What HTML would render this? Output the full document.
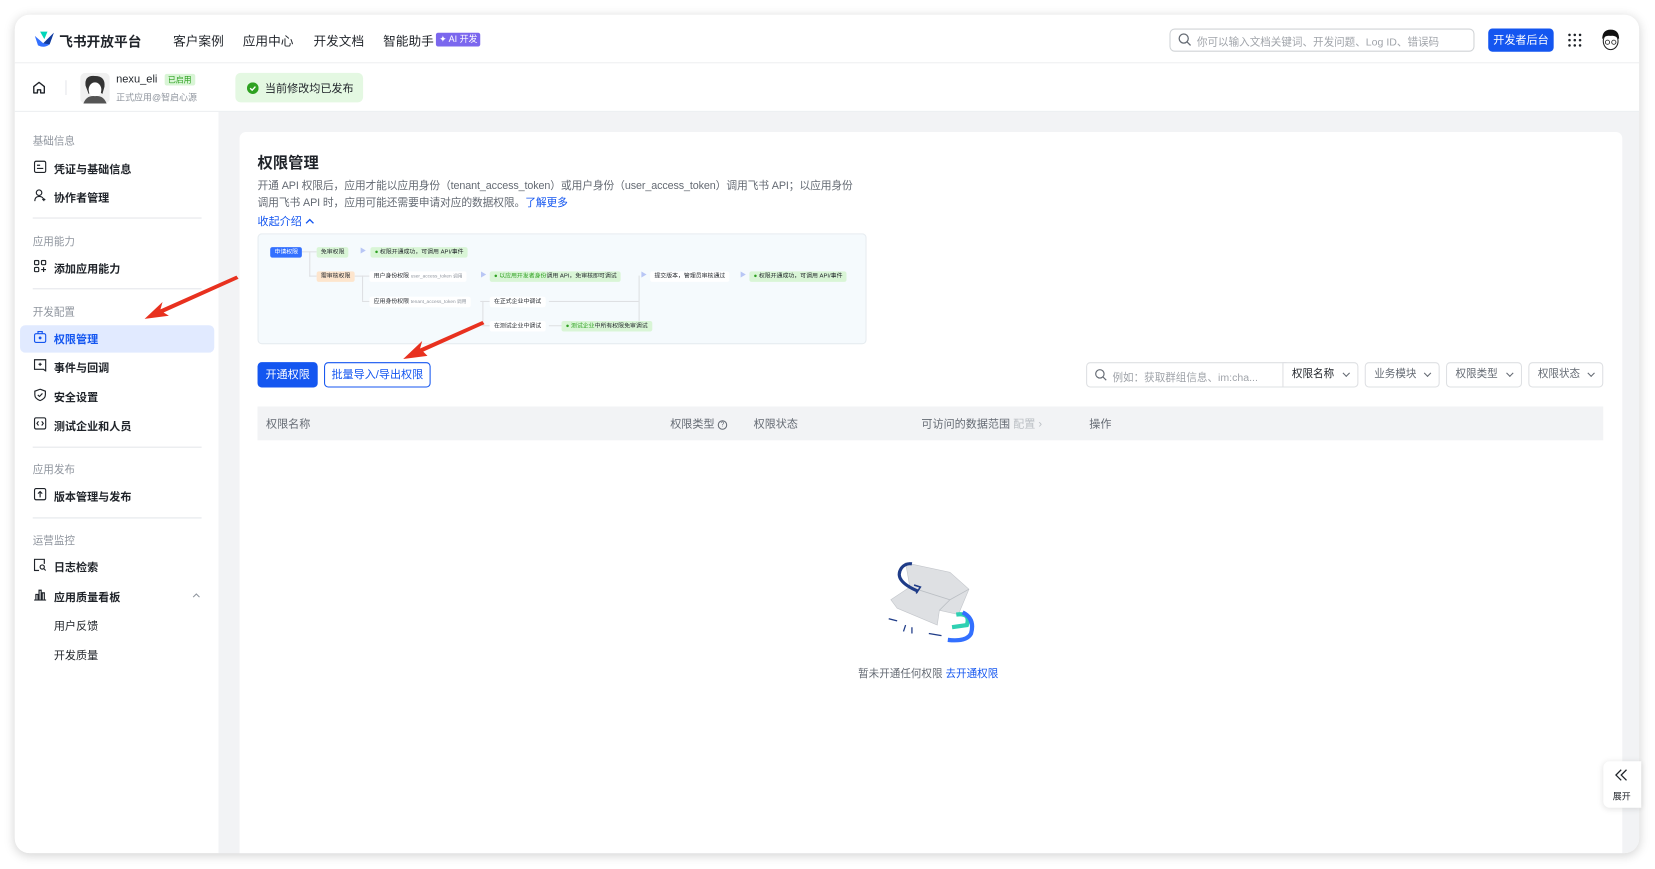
<!DOCTYPE html>
<html><head><meta charset="utf-8">
<style>
*{box-sizing:border-box;margin:0;padding:0}
html,body{width:1655px;height:869px;overflow:hidden;background:#fff}
body{font-family:"Liberation Sans","Noto Sans CJK SC",sans-serif;color:#1f2329}
#stage{position:absolute;left:0;top:0;width:1568px;height:823px;transform:scale(1.05548,1.0559);transform-origin:0 0}
.a{position:absolute;white-space:nowrap}
.win{position:absolute;left:14px;top:14px;width:1539px;height:794px;border-radius:14px;background:#fff;box-shadow:0 2px 10px rgba(0,0,0,.18);overflow:hidden}
.nav{font-size:12px;color:#1f2329}
.sec{font-size:10px;color:#8f959e}
.item{font-size:10.5px;color:#1f2329;font-weight:600}
.item svg{position:absolute;left:-19px;top:-1px}
.dv{position:absolute;left:31px;width:160px;height:1px;background:#e4e6ea}
.bx{position:absolute;height:10px;font-size:5.6px;line-height:10px;padding:0 4px;border-radius:2px;white-space:nowrap;color:#1f2329;background:#fff}
.g{background:#d9f5d6}
.ln{position:absolute;background:#dee0e3}
.sel{position:absolute;top:343px;height:24px;border:1px solid #dee0e3;border-radius:4px;font-size:10px;color:#646a73;line-height:22px;padding-left:8px;background:#fff}
.sel:after{content:"";position:absolute;right:8px;top:7px;width:4px;height:4px;border-right:1px solid #646a73;border-bottom:1px solid #646a73;transform:rotate(45deg)}
.th{position:absolute;top:394px;font-size:10.5px;color:#646a73}
</style></head><body>
<div id="stage">
<div class="win">
 <div style="position:absolute;left:0;top:0;width:1539px;height:46px;border-bottom:1px solid #eceef0;background:#fff"></div>
 <div style="position:absolute;left:0;top:46px;width:1539px;height:46px;border-bottom:1px solid #eceef0;background:#fff"></div>
 <div style="position:absolute;left:0;top:92px;width:193px;height:702px;background:#fff"></div>
 <div style="position:absolute;left:193px;top:92px;width:1346px;height:702px;background:#f2f3f5"></div>
 <div style="position:absolute;left:213px;top:111px;width:1310px;height:690px;background:#fff;border-radius:6px"></div>
</div>

<svg class="a" style="left:32px;top:29px" width="20" height="17" viewBox="0 0 20 17"><path d="M1 5 L9 12 L19 2 L15 13 Q10 17 4 14 Z" fill="#3370ff"/><path d="M6 1 L13 1 L10 8 Z" fill="#00d6b9"/><path d="M9 12 L19 2 L15 13 Z" fill="#133c9a"/></svg>
<div class="a" style="left:56px;top:29px;font-size:13px;font-weight:700">飞书开放平台</div>
<div class="a nav" style="left:164px;top:30px">客户案例</div>
<div class="a nav" style="left:230px;top:30px">应用中心</div>
<div class="a nav" style="left:297px;top:30px">开发文档</div>
<div class="a nav" style="left:363px;top:30px">智能助手</div>
<div class="a" style="left:413px;top:31px;height:13px;padding:0 3px;background:#7b67ee;color:#fff;font-size:8.5px;line-height:13px;border-radius:2px">✦ AI 开发</div>

<div class="a" style="left:1108px;top:27px;width:289px;height:22px;border:1px solid #d0d3d6;border-radius:5px"></div>
<svg class="a" style="left:1116px;top:31px" width="13" height="13" viewBox="0 0 13 13"><circle cx="5.5" cy="5.5" r="4.3" fill="none" stroke="#646a73" stroke-width="1.2"/><path d="M8.7 8.7 L12 12" stroke="#646a73" stroke-width="1.2"/></svg>
<div class="a" style="left:1134px;top:31px;font-size:10px;color:#a0a4aa">你可以输入文档关键词、开发问题、Log ID、错误码</div>
<div class="a" style="left:1410px;top:27px;width:62px;height:22px;background:#1456f0;border-radius:4px;color:#fff;font-size:10.5px;line-height:22px;text-align:center">开发者后台</div>
<svg class="a" style="left:1485px;top:31px" width="14" height="14" viewBox="0 0 14 14" fill="#1f2329"><circle cx="2" cy="2" r="1.2"/><circle cx="7" cy="2" r="1.2"/><circle cx="12" cy="2" r="1.2"/><circle cx="2" cy="7" r="1.2"/><circle cx="7" cy="7" r="1.2"/><circle cx="12" cy="7" r="1.2"/><circle cx="2" cy="12" r="1.2"/><circle cx="7" cy="12" r="1.2"/><circle cx="12" cy="12" r="1.2"/></svg>
<svg class="a" style="left:1516px;top:27px" width="20" height="22" viewBox="0 0 20 22"><ellipse cx="10" cy="12" rx="7" ry="8" fill="#fff" stroke="#222"/><path d="M2 10 Q2 1 10 1 Q18 1 18 10 Q14 6 10 7 Q5 6 2 10Z" fill="#111"/><circle cx="7" cy="13" r="2" fill="none" stroke="#222" stroke-width=".8"/><circle cx="13" cy="13" r="2" fill="none" stroke="#222" stroke-width=".8"/></svg>

<svg class="a" style="left:30px;top:76px" width="14" height="14" viewBox="0 0 14 14"><path d="M2 6 L7 2 L12 6 V12 H8.5 V9 H5.5 V12 H2 Z" fill="none" stroke="#1f2329" stroke-width="1.3" stroke-linejoin="round"/></svg>
<div class="a" style="left:62px;top:76px;width:1px;height:14px;background:#e4e6ea"></div>
<svg class="a" style="left:76px;top:69px" width="28" height="29" viewBox="0 0 28 29"><rect width="28" height="29" rx="5" fill="#f0f0f0"/><path d="M5 12 Q4 2 14 3 Q24 3 23 13 L21 20 Q14 14 8 20 Z" fill="#333"/><ellipse cx="14" cy="16" rx="6" ry="7" fill="#fff"/><path d="M3 29 Q6 21 14 22 Q22 21 25 29Z" fill="#555"/></svg>
<div class="a" style="left:110px;top:69px;font-size:10.5px">nexu_eli</div>
<div class="a" style="left:156px;top:70px;height:11px;padding:0 3px;background:#d9f5d6;color:#2ea121;font-size:7.5px;line-height:11px;border-radius:2px">已启用</div>
<div class="a" style="left:110px;top:86px;font-size:8.5px;color:#8f959e">正式应用@智启心源</div>
<div class="a" style="left:223px;top:69px;width:121px;height:28px;background:#e4f8e2;border-radius:5px"></div>
<svg class="a" style="left:234px;top:78px" width="11" height="11" viewBox="0 0 11 11"><circle cx="5.5" cy="5.5" r="5.5" fill="#2ea121"/><path d="M3 5.6 L4.9 7.4 L8 4" fill="none" stroke="#fff" stroke-width="1.3"/></svg>
<div class="a" style="left:251px;top:76px;font-size:10.5px;color:#1f2329">当前修改均已发布</div>

<div class="a sec" style="left:31px;top:125px">基础信息</div>
<div class="a item" style="left:51px;top:153px"><svg width="12" height="12" viewBox="0 0 12 12"><rect x=".7" y=".7" width="10.6" height="10.6" rx="1.5" fill="none" stroke="#1f2329" stroke-width="1.1"/><path d="M3 4.5h3M3 7.5h6" stroke="#1f2329" stroke-width="1.1"/></svg>凭证与基础信息</div>
<div class="a item" style="left:51px;top:180px"><svg width="12" height="12" viewBox="0 0 12 12"><circle cx="5" cy="3.5" r="2.6" fill="none" stroke="#1f2329" stroke-width="1.1"/><path d="M1 11.5 Q1 7 5 7 Q8 7 8.8 9M9.5 8.5v3M8 10h3" fill="none" stroke="#1f2329" stroke-width="1.1"/></svg>协作者管理</div>
<div class="dv" style="top:206px"></div>
<div class="a sec" style="left:31px;top:220px">应用能力</div>
<div class="a item" style="left:51px;top:247px"><svg width="12" height="12" viewBox="0 0 12 12" fill="none" stroke="#1f2329" stroke-width="1.1"><rect x=".7" y=".7" width="4" height="4" rx="1"/><rect x="7.3" y=".7" width="4" height="4" rx="1"/><rect x=".7" y="7.3" width="4" height="4" rx="1"/><path d="M9.3 7v4.6M7 9.3h4.6"/></svg>添加应用能力</div>
<div class="dv" style="top:273px"></div>
<div class="a sec" style="left:31px;top:287px">开发配置</div>
<div class="a" style="left:19px;top:308px;width:184px;height:26px;background:#e1eaff;border-radius:5px"></div>
<div class="a item" style="left:51px;top:314px;color:#1456f0"><svg width="12" height="12" viewBox="0 0 12 12" fill="none" stroke="#1456f0" stroke-width="1.1"><rect x=".7" y="3" width="10.6" height="8.3" rx="1.5"/><path d="M4 3V1h4v2"/><circle cx="6" cy="7" r=".8" fill="#1456f0"/></svg>权限管理</div>
<div class="a item" style="left:51px;top:341px"><svg width="12" height="12" viewBox="0 0 12 12" fill="none" stroke="#1f2329" stroke-width="1.1"><path d="M.7 .7h10.6v10.6l-2-1.5h-8.6z"/><path d="M6 3.5v3M4.5 5h3"/></svg>事件与回调</div>
<div class="a item" style="left:51px;top:369px"><svg width="12" height="12" viewBox="0 0 12 12" fill="none" stroke="#1f2329" stroke-width="1.1"><path d="M6 .6 L11 2.5 V6 Q11 9.5 6 11.4 Q1 9.5 1 6 V2.5Z"/><path d="M3.8 6 L5.4 7.5 L8.2 4.6"/></svg>安全设置</div>
<div class="a item" style="left:51px;top:396px"><svg width="12" height="12" viewBox="0 0 12 12" fill="none" stroke="#1f2329" stroke-width="1.1"><rect x=".7" y=".7" width="10.6" height="10.6" rx="1.5"/><path d="M4.5 4L3 6l1.5 2M7.5 4L9 6 7.5 8"/></svg>测试企业和人员</div>
<div class="dv" style="top:423px"></div>
<div class="a sec" style="left:31px;top:436px">应用发布</div>
<div class="a item" style="left:51px;top:463px"><svg width="12" height="12" viewBox="0 0 12 12" fill="none" stroke="#1f2329" stroke-width="1.1"><rect x=".7" y=".7" width="10.6" height="10.6" rx="1.5"/><path d="M6 9V3.5M4 5.5l2-2 2 2"/></svg>版本管理与发布</div>
<div class="dv" style="top:490px"></div>
<div class="a sec" style="left:31px;top:503px">运营监控</div>
<div class="a item" style="left:51px;top:530px"><svg width="12" height="12" viewBox="0 0 12 12" fill="none" stroke="#1f2329" stroke-width="1.1"><path d="M10 5V.7H.7v10.6H5"/><circle cx="8" cy="8" r="2"/><path d="M9.5 9.5l1.8 1.8"/></svg>日志检索</div>
<div class="a item" style="left:51px;top:558px"><svg width="12" height="12" viewBox="0 0 12 12" fill="none" stroke="#1f2329" stroke-width="1.1"><path d="M.3 11.3h11.4M2 11V6h2v5M5 11V2h2v9M8 11V4.5h2V11"/></svg>应用质量看板</div>
<svg class="a" style="left:182px;top:561px" width="8" height="6" viewBox="0 0 8 6"><path d="M1 4.5 L4 1.5 L7 4.5" fill="none" stroke="#8f959e" stroke-width="1"/></svg>
<div class="a item" style="left:51px;top:585px;font-weight:400">用户反馈</div>
<div class="a item" style="left:51px;top:613px;font-weight:400">开发质量</div>

<div class="a" style="left:244px;top:143px;font-size:14.5px;font-weight:600">权限管理</div>
<div class="a" style="left:244px;top:169px;font-size:10.2px;color:#646a73;line-height:16px;letter-spacing:-.1px">开通 API 权限后，应用才能以应用身份（tenant_access_token）或用户身份（user_access_token）调用飞书 API；以应用身份<br>调用飞书 API 时，应用可能还需要申请对应的数据权限。<span style="color:#1456f0">了解更多</span></div>
<div class="a" style="left:244px;top:202px;font-size:10.5px;color:#1456f0">收起介绍 <svg width="9" height="7" viewBox="0 0 9 7"><path d="M1 5.5 L4.5 2 L8 5.5" fill="none" stroke="#1456f0" stroke-width="1.3"/></svg></div>

<div class="a" style="left:244px;top:221px;width:577px;height:105px;background:#f5fafd;border:1px solid #e6ecf0;border-radius:4px"></div>
<div class="ln" style="left:286px;top:238px;width:14px;height:1px"></div>
<div class="ln" style="left:293px;top:238px;width:1px;height:24px"></div>
<div class="ln" style="left:293px;top:261px;width:7px;height:1px"></div>
<div class="ln" style="left:336px;top:261px;width:14px;height:1px"></div>
<div class="ln" style="left:343px;top:261px;width:1px;height:24px"></div>
<div class="ln" style="left:343px;top:285px;width:7px;height:1px"></div>
<div class="ln" style="left:455px;top:285px;width:9px;height:1px"></div>
<div class="ln" style="left:457px;top:285px;width:1px;height:24px"></div>
<div class="ln" style="left:457px;top:308px;width:7px;height:1px"></div>
<div class="ln" style="left:520px;top:285px;width:85px;height:1px"></div>
<div class="ln" style="left:605px;top:261px;width:1px;height:48px"></div>
<div class="ln" style="left:520px;top:308px;width:12px;height:1px"></div>
<div class="bx" style="left:256px;top:234px;background:#3370ff;color:#fff">申请权限</div>
<div class="bx g" style="left:300px;top:234px">免审权限</div>
<div class="a" style="left:341px;top:232px;font-size:6px;color:#b8c6f5">▶</div>
<div class="bx g" style="left:351px;top:234px"><span style="color:#2ea121">●</span> 权限开通成功，可调用 API/事件</div>
<div class="bx" style="left:300px;top:257px;background:#fde5cd">需审核权限</div>
<div class="bx" style="left:350px;top:257px">用户身份权限 <span style="color:#8f959e;font-size:4.5px">user_access_token 调用</span></div>
<div class="a" style="left:455px;top:255px;font-size:6px;color:#b8c6f5">▶</div>
<div class="bx g" style="left:464px;top:257px"><span style="color:#2ea121">●</span> <span style="color:#2ea121">以应用开发者身份</span>调用 API，免审核即可调试</div>
<div class="a" style="left:607px;top:255px;font-size:6px;color:#b8c6f5">▶</div>
<div class="bx" style="left:616px;top:257px">提交版本，管理员审核通过</div>
<div class="a" style="left:701px;top:255px;font-size:6px;color:#b8c6f5">▶</div>
<div class="bx g" style="left:710px;top:257px"><span style="color:#2ea121">●</span> 权限开通成功，可调用 API/事件</div>
<div class="bx" style="left:350px;top:281px">应用身份权限 <span style="color:#8f959e;font-size:4.5px">tenant_access_token 调用</span></div>
<div class="bx" style="left:464px;top:281px">在正式企业中调试</div>
<div class="bx" style="left:464px;top:304px">在测试企业中调试</div>
<div class="bx g" style="left:532px;top:304px"><span style="color:#2ea121">● 测试企业</span>中所有权限免审调试</div>

<div class="a" style="left:244px;top:343px;width:57px;height:24px;background:#1456f0;border-radius:4px;color:#fff;font-size:10.5px;line-height:24px;text-align:center">开通权限</div>
<div class="a" style="left:307px;top:343px;width:101px;height:24px;border:1px solid #1456f0;border-radius:4px;color:#1456f0;font-size:10.5px;line-height:22px;text-align:center">批量导入/导出权限</div>

<div class="a" style="left:1029px;top:343px;width:190px;height:24px;border:1px solid #dee0e3;border-radius:4px 0 0 4px"></div>
<svg class="a" style="left:1037px;top:349px" width="12" height="12" viewBox="0 0 13 13"><circle cx="5.5" cy="5.5" r="4.3" fill="none" stroke="#646a73" stroke-width="1.2"/><path d="M8.7 8.7 L12 12" stroke="#646a73" stroke-width="1.2"/></svg>
<div class="a" style="left:1054px;top:349px;font-size:10px;color:#a0a4aa">例如：获取群组信息、im:cha...</div>
<div class="sel" style="left:1215px;width:72px;color:#1f2329;border-radius:0 4px 4px 0">权限名称</div>
<div class="sel" style="left:1293px;width:71px">业务模块</div>
<div class="sel" style="left:1370px;width:72px">权限类型</div>
<div class="sel" style="left:1448px;width:71px">权限状态</div>

<div class="a" style="left:244px;top:385px;width:1275px;height:32px;background:#f2f3f5"></div>
<div class="th" style="left:252px">权限名称</div>
<div class="th" style="left:635px">权限类型 <span style="display:inline-block;width:9px;height:9px;border:1px solid #646a73;border-radius:50%;font-size:6.5px;line-height:7px;text-align:center;vertical-align:1px">?</span></div>
<div class="th" style="left:714px">权限状态</div>
<div class="th" style="left:873px">可访问的数据范围 <span style="color:#bbbfc4">配置 ›</span></div>
<div class="th" style="left:1032px">操作</div>

<svg class="a" style="left:840px;top:530px" width="90" height="82" viewBox="0 0 90 82">
 <path d="M18 3 L60 12 L78 28 L68 52 L50 48 L48 62 L10 46 L4 38 L22 26 Z" fill="#dee0e3" stroke="#c4c7cc" stroke-width=".6"/>
 <path d="M22 26 L60 38 L78 28 M60 38 L50 48" fill="none" stroke="#bbbfc4" stroke-width=".8"/>
 <path d="M30 30 Q6 20 14 8 Q18 3 24 4" fill="none" stroke="#1f3c88" stroke-width="3"/>
 <path d="M28 32 L32 26 L26 24" fill="none" stroke="#1f3c88" stroke-width="1.5"/>
 <path d="M66 52 Q80 50 76 62 L62 64" fill="none" stroke="#2fd0b2" stroke-width="4"/>
 <path d="M72 50 Q84 56 80 70 Q76 78 58 76" fill="none" stroke="#3370ff" stroke-width="4"/>
 <path d="M52 72 L40 70 M10 58 L2 56 M18 62 L16 68 M24 64 L24 70" stroke="#1f3c88" stroke-width="1.2"/>
</svg>
<div class="a" style="left:813px;top:629px;font-size:10px;color:#646a73">暂未开通任何权限 <span style="color:#1456f0">去开通权限</span></div>

<div class="a" style="left:1519px;top:721px;width:36px;height:44px;background:#fff;border-radius:6px 0 0 6px;box-shadow:0 1px 6px rgba(0,0,0,.12)"></div>
<svg class="a" style="left:1529px;top:728px" width="14" height="12" viewBox="0 0 14 12"><path d="M7 1 L2 6 L7 11 M12 1 L7 6 L12 11" fill="none" stroke="#1f2329" stroke-width="1.2"/></svg>
<div class="a" style="left:1528px;top:748px;font-size:8.5px;color:#1f2329">展开</div>

<svg class="a" style="left:0;top:0" width="1568" height="823">
 <path d="M224 261 L152 293 L154 286 L137 302 L160 299 L155 296 L226 264 Z" fill="#e8311f"/>
 <path d="M457 304 L398 330 L400 323 L382 340 L405 337 L401 333 L459 307 Z" fill="#e8311f"/>
</svg>
</div>
</body></html>
